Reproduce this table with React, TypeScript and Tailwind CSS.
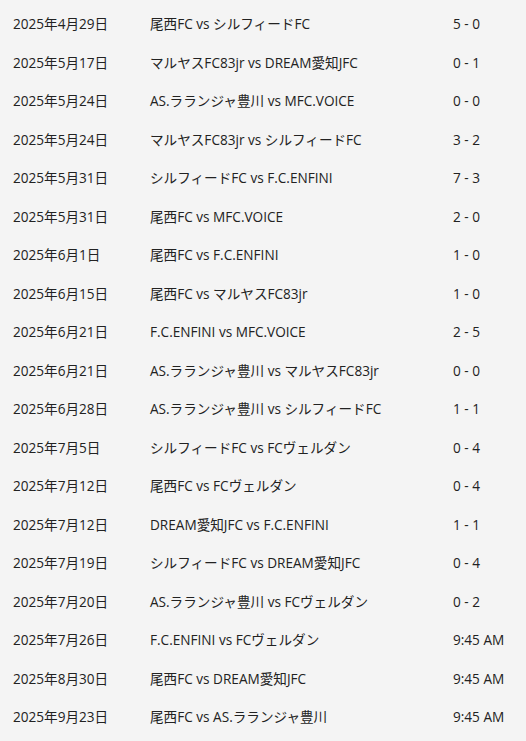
const rows: [string, string, string][] = [
  ["2025年4月29日", "尾西FC vs シルフィードFC", "5 - 0"],
  ["2025年5月17日", "マルヤスFC83jr vs DREAM愛知JFC", "0 - 1"],
  ["2025年5月24日", "AS.ラランジャ豊川 vs MFC.VOICE", "0 - 0"],
  ["2025年5月24日", "マルヤスFC83jr vs シルフィードFC", "3 - 2"],
  ["2025年5月31日", "シルフィードFC vs F.C.ENFINI", "7 - 3"],
  ["2025年5月31日", "尾西FC vs MFC.VOICE", "2 - 0"],
  ["2025年6月1日", "尾西FC vs F.C.ENFINI", "1 - 0"],
  ["2025年6月15日", "尾西FC vs マルヤスFC83jr", "1 - 0"],
  ["2025年6月21日", "F.C.ENFINI vs MFC.VOICE", "2 - 5"],
  ["2025年6月21日", "AS.ラランジャ豊川 vs マルヤスFC83jr", "0 - 0"],
  ["2025年6月28日", "AS.ラランジャ豊川 vs シルフィードFC", "1 - 1"],
  ["2025年7月5日", "シルフィードFC vs FCヴェルダン", "0 - 4"],
  ["2025年7月12日", "尾西FC vs FCヴェルダン", "0 - 4"],
  ["2025年7月12日", "DREAM愛知JFC vs F.C.ENFINI", "1 - 1"],
  ["2025年7月19日", "シルフィードFC vs DREAM愛知JFC", "0 - 4"],
  ["2025年7月20日", "AS.ラランジャ豊川 vs FCヴェルダン", "0 - 2"],
  ["2025年7月26日", "F.C.ENFINI vs FCヴェルダン", "9:45 AM"],
  ["2025年8月30日", "尾西FC vs DREAM愛知JFC", "9:45 AM"],
  ["2025年9月23日", "尾西FC vs AS.ラランジャ豊川", "9:45 AM"],
];

export default function App() {
  return (
    <div
      className="min-h-[741px] w-[526px] bg-[#f4f4f4] pt-[5px] text-[13.6px] text-[#222]"
      style={{ fontFamily: '"Open Sans", "Noto Sans CJK JP", sans-serif' }}
    >
      {rows.map(([date, match, score], i) => (
        <div key={i} className="flex h-[38.5px] items-center">
          <div className="w-[150px] shrink-0 pl-[13px]">{date}</div>
          <div className="w-[303px] shrink-0">{match}</div>
          <div>{score}</div>
        </div>
      ))}
    </div>
  );
}
